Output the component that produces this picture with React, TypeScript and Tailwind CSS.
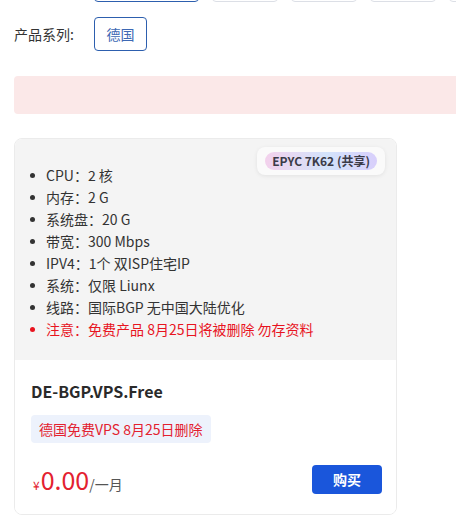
import React from "react";

const font = { fontFamily: '"Noto Sans CJK SC", "Noto Sans", sans-serif' };

const specs = [
  "CPU：2 核",
  "内存：2 G",
  "系统盘：20 G",
  "带宽：300 Mbps",
  "IPV4：1个 双ISP住宅IP",
  "系统：仅限 Liunx",
  "线路：国际BGP 无中国大陆优化",
];

export default function App() {
  return (
    <div className="w-[456px] h-[529px] overflow-hidden bg-white text-[#333]" style={font}>
      <div className="pl-[14px]">
        {/* top (scrolled) row */}
        <div className="flex gap-[13px] pl-[80px] mt-[-32px] h-[34px]">
          <div className="w-[105px] h-[34px] shrink-0 rounded border border-[#2d5fae]" />
          <div className="w-[66px] h-[34px] shrink-0 rounded border border-[#dcdfe6]" />
          <div className="w-[66px] h-[34px] shrink-0 rounded border border-[#dcdfe6]" />
          <div className="w-[66px] h-[34px] shrink-0 rounded border border-[#dcdfe6]" />
          <div className="w-[66px] h-[34px] shrink-0 rounded border border-[#dcdfe6]" />
        </div>

        {/* product series row */}
        <div className="flex items-center mt-[15px] h-[34px]">
          <div className="w-[80px] text-[14px] text-[#333]">产品系列:</div>
          <div className="w-[53px] h-[34px] rounded border border-[#2d5fae] flex items-center justify-center text-[14px] text-[#3d68b4]">
            德国
          </div>
        </div>

        {/* pink alert bar */}
        <div className="mt-[25px] h-[38px] w-[460px] rounded bg-[#fbe8e8]" />

        {/* card */}
        <div className="mt-[24px] w-[383px] rounded-lg border border-[#ebebeb] overflow-hidden relative">
          <div className="bg-[#f4f4f4] pt-[25px] pb-[20px] pl-[15px]">
            <div className="absolute top-[8px] right-[11px] rounded-lg bg-[#fafafa] shadow-[0_1px_4px_rgba(0,0,0,0.08)] px-[8px] py-[5px]">
              <div className="rounded-full bg-[linear-gradient(90deg,#f3d1ec_0%,#d3e3fb_55%,#d8cffb_100%)] px-[7px] h-[18px] flex items-center text-[12px] font-bold text-[#3b3b48] leading-none">
                EPYC 7K62 (共享)
              </div>
            </div>
            <ul className="flex flex-col">
              {specs.map((s) => (
                <li key={s} className="flex items-center h-[22px] text-[14px] text-[#333]">
                  <span className="w-[5px] h-[5px] rounded-full bg-[#333] mr-[11px] shrink-0" />
                  {s}
                </li>
              ))}
              <li className="flex items-center h-[22px] text-[14px] text-[#e8141f]">
                <span className="w-[5px] h-[5px] rounded-full bg-[#e8141f] mr-[11px] shrink-0" />
                注意：免费产品 8月25日将被删除 勿存资料
              </li>
            </ul>
          </div>
          <div className="bg-white pl-[16px] pr-[14px] pt-[18px] pb-[19px]">
            <div className="text-[16px] font-bold text-[#2a2a2a] leading-[26px]">DE-BGP.VPS.Free</div>
            <div className="mt-[11px] inline-flex items-center h-[28px] px-[8px] rounded-sm bg-[#edf2fc] text-[14px] text-[#e3212f]">
              德国免费VPS 8月25日删除
            </div>
            <div className="mt-[21px] flex items-end justify-between">
              <div className="flex items-baseline pl-[2px]">
                <span className="text-[12px] text-[#e3212f] mr-[1px]">¥</span>
                <span className="text-[25px] leading-[30px] text-[#e3212f]">0.00</span>
                <span className="text-[14px] text-[#555]">/一月</span>
              </div>
              <button className="w-[70px] h-[29px] rounded bg-[#1a56db] text-white text-[14px] font-bold flex items-center justify-center mb-[1px]">
                购买
              </button>
            </div>
          </div>
        </div>
      </div>
    </div>
  );
}
